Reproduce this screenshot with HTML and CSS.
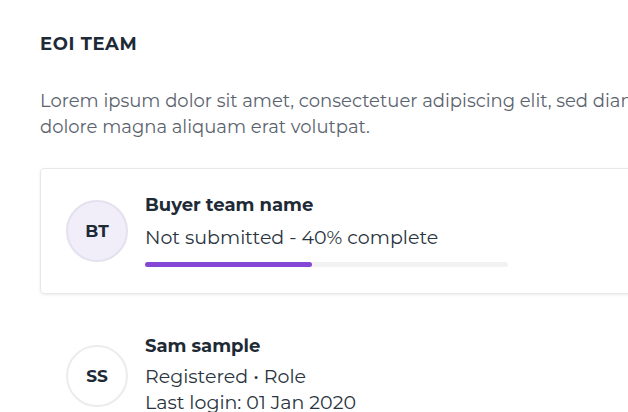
FILE: index.html
```html
<!DOCTYPE html>
<html>
<head>
<meta charset="utf-8">
<link rel="stylesheet" href="styles.css">
</head>
<body>
<main class="page">
  <h2 class="section-title">EOI TEAM</h2>
  <p class="intro">Lorem ipsum dolor sit amet, consectetuer adipiscing elit, sed diam nonummy nibh euismod tincidunt ut laoreet<br>dolore magna aliquam erat volutpat.</p>
  <div class="team-card">
    <div class="avatar avatar-team">BT</div>
    <div class="info">
      <div class="name">Buyer team name</div>
      <div class="meta">Not submitted - 40% complete</div>
      <div class="progress"><div class="progress-fill" style="width:46%"></div></div>
    </div>
  </div>
  <div class="member">
    <div class="avatar avatar-member">SS</div>
    <div class="info">
      <div class="name">Sam sample</div>
      <div class="meta">Registered • Role</div>
      <div class="meta">Last login: 01 Jan 2020</div>
    </div>
  </div>
</main>
</body>
</html>
```
FILE: styles.css
```css
html, body {
  margin: 0;
  padding: 0;
  background: #ffffff;
  overflow: hidden;
}
body {
  font-family: "Montserrat", "Lato", "Open Sans", sans-serif;
  color: #24303c;
}
.page {
  width: 1000px;
  padding: 33px 0 0 40px;
}
.section-title {
  margin: 0;
  font-size: 18px;
  font-weight: 700;
  line-height: 22px;
  letter-spacing: 0.6px;
  color: #1e2a36;
}
.intro {
  margin: 33px 0 0;
  font-size: 18px;
  line-height: 26px;
  color: #5b636e;
  white-space: nowrap;
}
.team-card {
  margin-top: 28px;
  width: 640px;
  border: 1px solid #e8e8e8;
  border-radius: 4px;
  box-shadow: 0 1px 3px rgba(0,0,0,0.08);
  display: flex;
  align-items: center;
  padding: 25px 25px 26px;
  gap: 17px;
}
.avatar {
  width: 58px;
  height: 58px;
  border-radius: 50%;
  border: 2px solid #e4e1ef;
  display: flex;
  align-items: center;
  justify-content: center;
  font-size: 17px;
  font-weight: 700;
  color: #1e2a36;
  flex: none;
}
.avatar-team {
  background: #f1eef9;
}
.avatar-member {
  background: #fff;
  border-color: #ececec;
}
.info {
  display: flex;
  flex-direction: column;
}
.name {
  font-size: 18px;
  font-weight: 700;
  line-height: 22px;
  color: #1e2a36;
}
.meta {
  font-size: 19px;
  line-height: 24px;
  color: #2a3440;
  margin-top: 10px;
}
.member .meta {
  line-height: 26px;
  margin-top: 7px;
}
.member .meta + .meta {
  margin-top: 0;
}
.progress {
  margin-top: 12px;
  width: 363px;
  height: 5px;
  border-radius: 3px;
  background: #f2f2f2;
}
.progress-fill {
  height: 100%;
  border-radius: 3px;
  background: #8548d6;
}
.member {
  display: flex;
  align-items: center;
  gap: 17px;
  padding: 41px 26px 0;
}
```
